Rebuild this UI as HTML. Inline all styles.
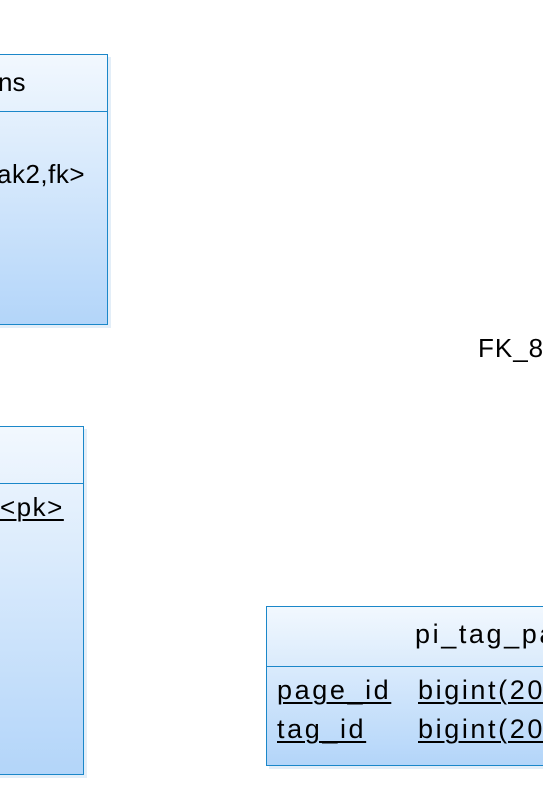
<!DOCTYPE html>
<html><head><style>
html,body{margin:0;width:543px;height:792px;overflow:hidden}
body{background:#fff;position:relative;font-family:"Liberation Sans",Arial,sans-serif;font-size:26px;color:#000}
.box{position:absolute;border:1px solid #1b87c9;background:linear-gradient(to bottom,#f2f8fe,#b3d5f9);box-shadow:3px 3px 0 #e3eef8}
.hl{position:absolute;left:0;right:0;height:1px;background:#1b87c9}
.t{position:absolute;white-space:nowrap;line-height:1}
.w{letter-spacing:2.6px;font-size:27px}
u{text-decoration:underline;text-underline-offset:3px;text-decoration-thickness:2px}
</style></head><body>
<div class="box" style="left:-10px;top:54px;width:116px;height:269px">
 <div class="hl" style="top:56px"></div>
</div>
<div class="t" style="left:-2px;top:69px">ns</div>
<div class="t" style="left:-3px;top:161px;letter-spacing:0.5px">ak2,fk&gt;</div>

<div class="box" style="left:-10px;top:426px;width:92px;height:347px">
 <div class="hl" style="top:56px"></div>
</div>
<div class="t" style="left:0px;top:494px;letter-spacing:1.5px"><u>&lt;pk&gt;</u></div>

<div class="t" style="left:478px;top:335px;letter-spacing:1px">FK_8</div>

<div class="box" style="left:266px;top:606px;width:300px;height:158px">
 <div class="hl" style="top:59px"></div>
</div>
<div class="t w" style="left:415px;top:621px">pi_tag_pages</div>
<div class="t w" style="left:277px;top:677px"><u>page_id</u></div>
<div class="t w" style="left:418px;top:677px"><u>bigint(20)</u></div>
<div class="t w" style="left:277px;top:716px"><u>tag_id</u></div>
<div class="t w" style="left:418px;top:716px"><u>bigint(20)</u></div>
</body></html>
